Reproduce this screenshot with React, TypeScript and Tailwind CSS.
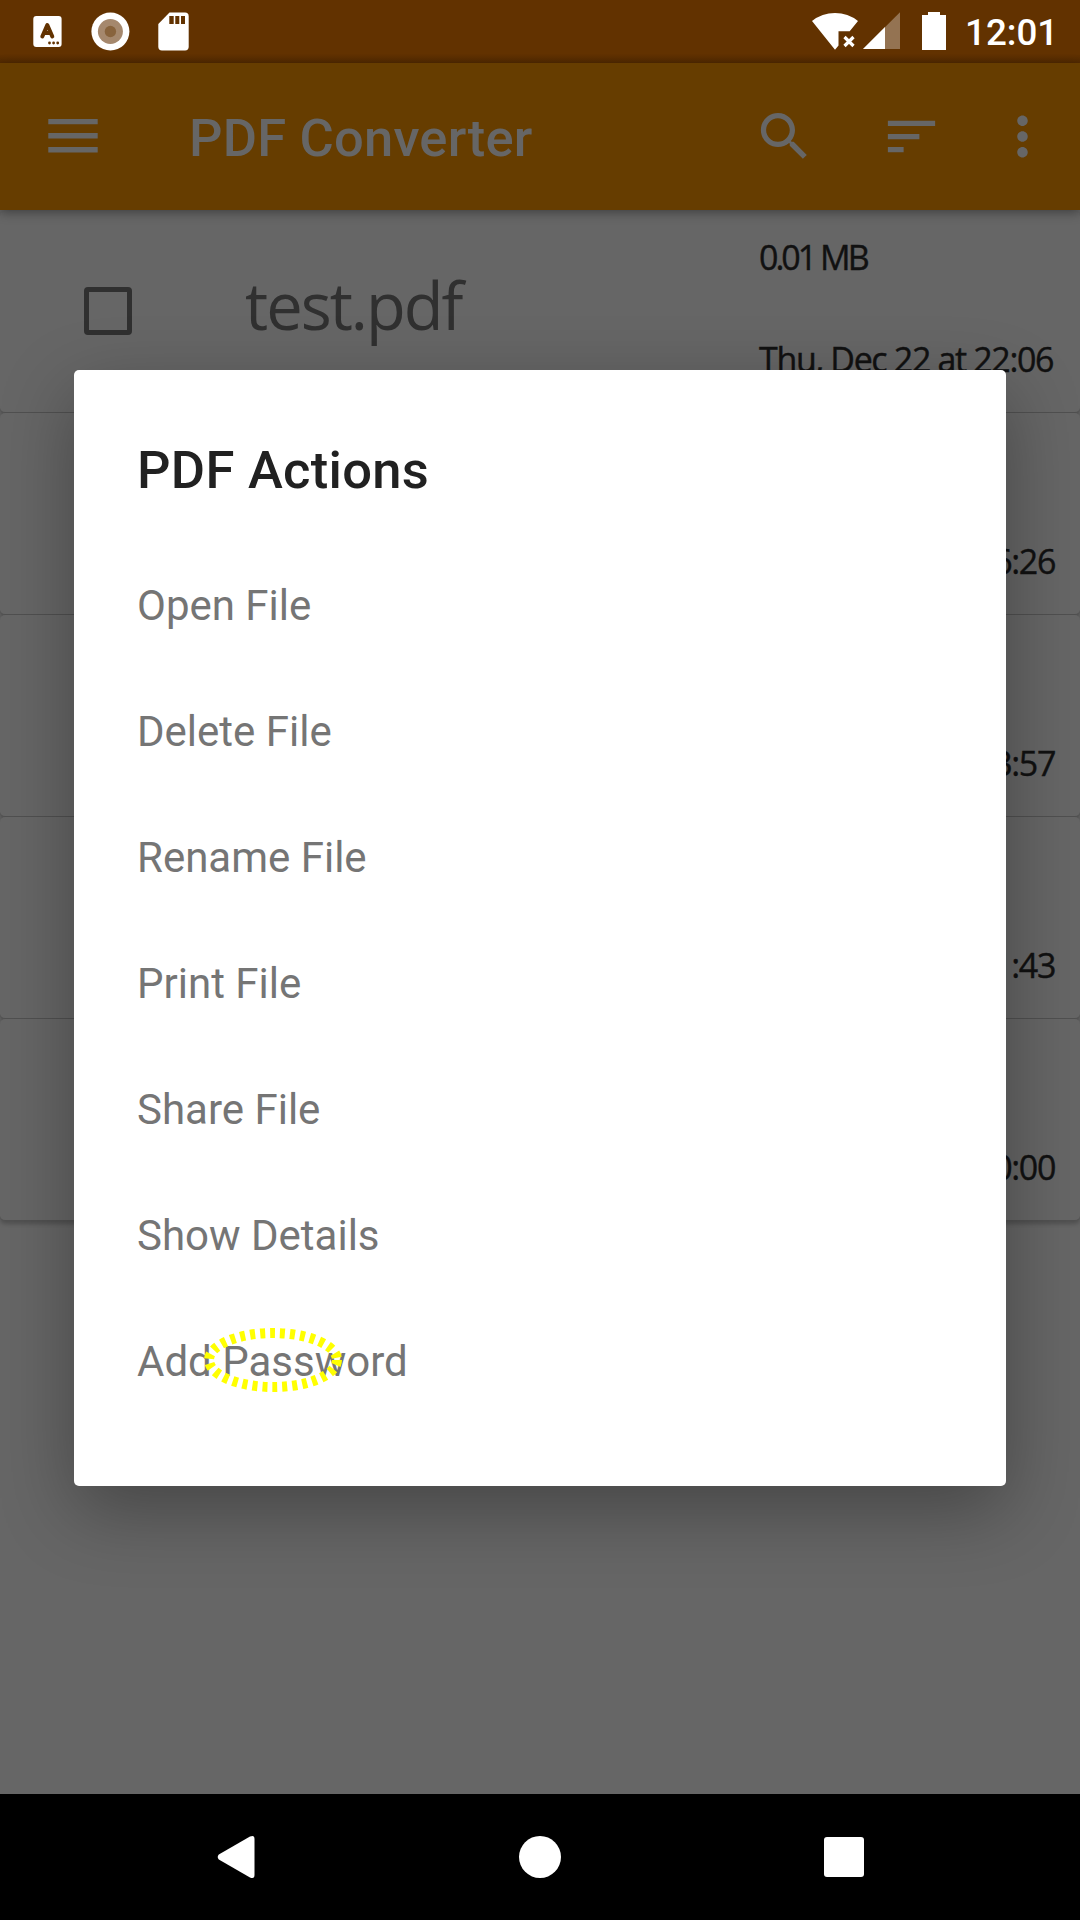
import React from "react";

const hand = "font-['Coming_Soon','Open_Sans',sans-serif]";

const files = [
  { name: "test.pdf", size: "0.01 MB", date: "Thu, Dec 22 at 22:06" },
  { date: "16:26" },
  { date: "13:57" },
  { date: "11:43" },
  { date: "00:00" },
];

const actions = ["Open File", "Delete File", "Rename File", "Print File", "Share File", "Show Details", "Add Password"];

function StatusBar() {
  return (
    <div className="flex h-[63px] justify-between bg-[linear-gradient(#623200_0,#623200_54px,#512900_63px)]">
      <svg width="200" height="63" viewBox="0 0 200 63" fill="#fff">
        <rect x="33.3" y="16" width="28.3" height="31" rx="3" />
        <path d="M42.300 36.500 47.3 25 52.300 36.500M44.500 33h5.600" fill="none" stroke="#623200" strokeWidth="4" strokeLinecap="round" strokeLinejoin="round" />
        <circle cx="49.5" cy="43" r="1.4" fill="#623200" />
        <circle cx="53.6" cy="43" r="1.4" fill="#623200" />
        <circle cx="57.7" cy="43" r="1.4" fill="#623200" />
        <circle cx="110.4" cy="31.5" r="19" />
        <circle cx="110.4" cy="31.5" r="12.5" fill="#a5886d" />
        <circle cx="110.4" cy="31.5" r="5.7" fill="#88633c" />
        <path d="M169.5 12.5H185a3.7 3.7 0 0 1 3.7 3.7v30.6a3.7 3.7 0 0 1-3.7 3.7h-23a3.7 3.7 0 0 1-3.7-3.7V24z" />
        <path d="M169.3 16h4.4v8h-4.4zM175.3 16h4v8h-4zM181 16h4v8h-4z" fill="#623200" />
      </svg>
      <div className="flex">
        <svg width="160" height="63" viewBox="800 0 160 63" fill="#fff">
          <path d="M812 21q10-8 23-8t23 8l-8.300 10.300H838.500V45.500L835 49.800z" />
          <path d="M844.5 37 853.500 46M853.500 37 844.500 46" stroke="#fff" strokeWidth="3.200" />
          <path d="M900 12.200V49H863z" opacity=".32" />
          <path d="M885 27.100V49H863z" />
          <path d="M928 12h12v3h6v35h-24V15h6z" />
        </svg>
        <div className="w-[120px] pl-[5px] font-[Roboto,sans-serif] text-[36.750px] font-medium leading-[66px] text-white">12:01</div>
      </div>
    </div>
  );
}

function Toolbar() {
  return (
    <div className="relative z-10 flex h-[147px] items-center bg-[#663d00] text-[#666] shadow-[0_3px_10px_rgba(0,0,0,0.35)]">
      <svg className="ml-[42px]" width="63" height="63" viewBox="0 0 63 63" fill="currentColor">
        <path d="M6.300 14h49.400v5.300H6.300zM6.300 28.100h49.400v5.300H6.300zM6.300 42.100h49.400v5.300H6.300z" />
      </svg>
      <div className="ml-[84px] flex-1 pt-1 font-[Roboto,sans-serif] text-[52.500px] font-medium leading-[63px] tracking-[0.200px]">PDF Converter</div>
      <svg width="63" height="63" viewBox="0 0 24 24" fill="currentColor">
        <path d="M15.500 14h-.790l-.280-.270C15.410 12.590 16 11.110 16 9.500 16 5.910 13.090 3 9.500 3S3 5.910 3 9.500 5.910 16 9.500 16c1.610 0 3.090-.590 4.230-1.570l.270.280v.790l5 4.990L20.490 19l-4.990-5zm-6 0C7.010 14 5 11.990 5 9.500S7.010 5 9.500 5 14 7.010 14 9.500 11.990 14 9.500 14z" />
      </svg>
      <svg className="ml-16" width="63" height="63" viewBox="0 0 24 24" fill="currentColor">
        <path d="M3 18h6v-2H3v2zM3 6v2h18V6H3zm0 7h12v-2H3v2z" />
      </svg>
      <svg className="mr-[26px] ml-12" width="63" height="63" viewBox="0 0 24 24" fill="currentColor">
        <path d="M12 8c1.100 0 2-.900 2-2s-.900-2-2-2-2 .900-2 2 .900 2 2 2zm0 2c-1.100 0-2 .900-2 2s.900 2 2 2 2-.900 2-2-.900-2-2-2zm0 6c-1.100 0-2 .900-2 2s.900 2 2 2 2-.900 2-2-.900-2-2-2z" />
      </svg>
    </div>
  );
}

function FileRow({ file }: { file: { name?: string; size?: string; date: string } }) {
  return (
    <div className={`flex h-[202px] rounded-[5px] border-b border-[#515151] bg-[#666] shadow-[0_3px_4px_rgba(0,0,0,0.22)] ${hand}`}>
      <div className="flex w-[245px] pt-[76px] pl-[84px]">
        {file.name && <div className="h-12 w-12 rounded-[4px] border-[5px] border-[#303030]" />}
      </div>
      <div className="w-[514px] pt-[54px] text-[65px] leading-[80px] tracking-[-2px] text-[#303030]">{file.name}</div>
      <div className="flex w-[296px] flex-col justify-between pt-[26px] pb-[33px] text-[34px] leading-[40px] whitespace-nowrap text-[#111] [-webkit-text-stroke:0.400px_#111]">
        <div className="tracking-[-3px]">{file.size}</div>
        <div className={file.name ? "tracking-[-1.350px]" : "text-right tracking-[-1.350px]"}>{file.date}</div>
      </div>
    </div>
  );
}

function ActionsDialog() {
  return (
    <div className="absolute top-[370px] left-[74px] z-20 h-[1116px] w-[932px] rounded-[5px] bg-white px-[63px] pt-[69px] font-[Roboto,sans-serif] shadow-[0_24px_75px_rgba(0,0,0,0.32)]">
      <div className="text-[52.500px] font-medium leading-[62px] tracking-[0.300px] text-[#212121]">PDF Actions</div>
      <div className="mt-[41px]">
        {actions.map((a) => (
          <div key={a} className="flex h-[126px] items-center text-[42px] text-[#757575]">{a}</div>
        ))}
      </div>
      <svg className="absolute top-[952px] left-[124px]" width="150" height="76" viewBox="0 0 150 76">
        <ellipse cx="75" cy="38" rx="64" ry="27" fill="none" stroke="#ff0" strokeWidth="10" strokeDasharray="5 5" />
      </svg>
    </div>
  );
}

export default function App() {
  return (
    <div className="relative flex h-[1920px] w-[1080px] flex-col overflow-hidden bg-[#666]">
      <StatusBar />
      <Toolbar />
      <div className="flex-1 pt-px">
        {files.map((f) => (
          <FileRow key={f.date} file={f} />
        ))}
      </div>
      <ActionsDialog />
      <div className="flex h-[126px] items-center bg-black">
        <svg width="1080" height="126" viewBox="0 0 1080 126" fill="#fff">
          <path d="M218.800 60.500 250 42.600q4.500-2 4.500 2.400v36q0 4.400-4.500 2.400L218.800 65.500q-2.200-2.500 0-5z" />
          <circle cx="540" cy="63" r="21" />
          <rect x="824" y="43" width="40" height="40" rx="3" />
        </svg>
      </div>
    </div>
  );
}
